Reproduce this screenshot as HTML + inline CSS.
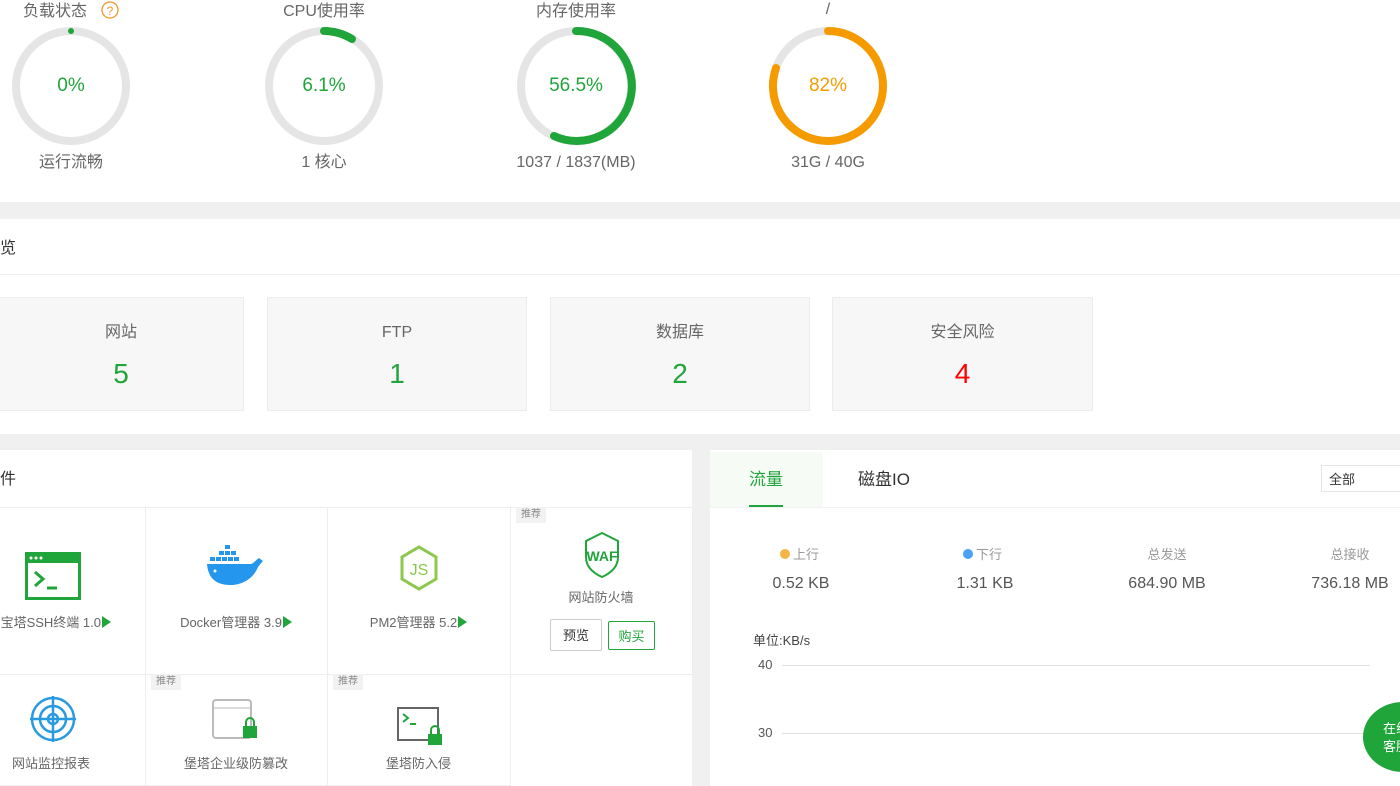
<!DOCTYPE html>
<html><head><meta charset="utf-8"><style>
*{box-sizing:border-box;margin:0;padding:0}
body{width:1400px;height:786px;overflow:hidden;background:#f0f0f0;font-family:"Liberation Sans","Noto Sans CJK SC",sans-serif;position:relative;color:#666}
.a{position:absolute}
.t{position:absolute;white-space:nowrap;line-height:24px}
.c{text-align:center;transform:translateX(-50%)}
.card{position:absolute;top:297px;height:114px;background:#f7f7f7;border:1px solid #ececec;text-align:center}
.card .l{position:absolute;left:0;right:0;top:25px;line-height:20px;font-size:16px;color:#666}
.card .n{position:absolute;left:0;right:0;top:59px;line-height:34px;font-size:28px;color:#20a53a}
.cell{position:absolute;border-right:1px solid #eee;border-bottom:1px solid #eee}
.tag{position:absolute;font-size:10px;color:#888;background:#f2f2f2;padding:1px 5px;top:0;left:6px;line-height:14px}
.lbl{position:absolute;width:100%;text-align:center;font-size:13px;color:#666;line-height:22px}
.tri{display:inline-block;width:0;height:0;border-left:9px solid #20a53a;border-top:6px solid transparent;border-bottom:6px solid transparent;vertical-align:-1px;margin-left:1px}
</style></head><body>
<div class="a" style="left:0;top:0;width:1400px;height:202px;background:#fff"></div>
<svg class="a" style="left:0;top:0" width="1000" height="202">
<g fill="none" stroke-width="8">
<circle cx="71" cy="86" r="55" stroke="#e5e5e5"/>
<circle cx="324" cy="86" r="55" stroke="#e5e5e5"/>
<circle cx="576" cy="86" r="55" stroke="#e5e5e5"/>
<circle cx="828" cy="86" r="55" stroke="#e5e5e5"/>
<circle cx="71" cy="31" r="3" fill="#20a53a" stroke="none"/>
<path d="M324 31 A55 55 0 0 1 352 39" stroke="#20a53a" stroke-linecap="round"/>
<path d="M576 31 A55 55 0 1 1 554 136" stroke="#20a53a" stroke-linecap="round"/>
<path d="M828 31 A55 55 0 1 1 776 68" stroke="#f59b00" stroke-linecap="round"/>
</g>
<circle cx="110" cy="10" r="8" fill="none" stroke="#f0962c" stroke-width="1.3"/>
<text x="110" y="15" font-size="12" fill="#f0962c" text-anchor="middle" font-family="Liberation Sans">?</text>
</svg>
<div class="t" style="left:23px;top:0;font-size:16px">负载状态</div>
<div class="t c" style="left:324px;top:0;font-size:16px">CPU使用率</div>
<div class="t c" style="left:576px;top:0;font-size:16px">内存使用率</div>
<div class="t c" style="left:828px;top:-2px;font-size:16px">/</div>
<div class="t c" style="left:71px;top:74px;font-size:19px;color:#20a53a">0%</div>
<div class="t c" style="left:324px;top:74px;font-size:19px;color:#20a53a">6.1%</div>
<div class="t c" style="left:576px;top:74px;font-size:19px;color:#20a53a">56.5%</div>
<div class="t c" style="left:828px;top:74px;font-size:19px;color:#f59b00">82%</div>
<div class="t c" style="left:71px;top:151px;font-size:16px">运行流畅</div>
<div class="t c" style="left:324px;top:151px;font-size:16px">1 核心</div>
<div class="t c" style="left:576px;top:151px;font-size:16px">1037 / 1837(MB)</div>
<div class="t c" style="left:828px;top:151px;font-size:16px">31G / 40G</div>

<div class="a" style="left:0;top:219px;width:1400px;height:215px;background:#fff"></div>
<div class="t" style="left:0;top:237px;font-size:16px;color:#333">览</div>
<div class="a" style="left:0;top:274px;width:1400px;height:1px;background:#eee"></div>
<div class="card" style="left:-2px;width:246px"><div class="l">网站</div><div class="n">5</div></div>
<div class="card" style="left:267px;width:260px"><div class="l">FTP</div><div class="n">1</div></div>
<div class="card" style="left:550px;width:260px"><div class="l">数据库</div><div class="n">2</div></div>
<div class="card" style="left:832px;width:261px"><div class="l">安全风险</div><div class="n" style="color:#f00">4</div></div>

<div class="a" style="left:0;top:450px;width:692px;height:336px;background:#fff"></div>
<div class="t" style="left:0;top:468px;font-size:16px;color:#333">件</div>
<div class="a" style="left:0;top:507px;width:692px;height:1px;background:#eee"></div>
<div class="cell" style="left:0;top:507px;width:146px;height:168px">
<svg class="a" style="left:25px;top:45px" width="56" height="48"><rect x="1.5" y="1.5" width="53" height="45" fill="none" stroke="#20a53a" stroke-width="3"/><rect x="1" y="1" width="54" height="10" fill="#20a53a"/><circle cx="6" cy="6" r="1.5" fill="#fff"/><circle cx="11" cy="6" r="1.5" fill="#fff"/><circle cx="16" cy="6" r="1.5" fill="#fff"/><path d="M10 20l8 7-8 7M22 36h10" stroke="#20a53a" stroke-width="3" fill="none"/></svg>
<div class="lbl" style="top:105px;text-align:right;padding-right:34px">宝塔SSH终端 1.0<span class="tri"></span></div></div>
<div class="cell" style="left:145px;top:507px;width:183px;height:168px">
<svg class="a" style="left:62px;top:38px" width="58" height="42"><g fill="#2496ed"><rect x="18" y="0" width="5" height="4"/><rect x="12" y="6" width="5" height="4"/><rect x="18" y="6" width="5" height="4"/><rect x="24" y="6" width="5" height="4"/><rect x="3" y="12" width="5" height="4"/><rect x="9" y="12" width="5" height="4"/><rect x="15" y="12" width="5" height="4"/><rect x="21" y="12" width="5" height="4"/><rect x="27" y="12" width="5" height="4"/><path d="M0 19h44c3-1 6-5 8-6l4 3c-2 2-4 5-5 6-4 10-14 18-28 18C8 40 1 32 0 19z"/></g><circle cx="8" cy="26" r="1.5" fill="#fff"/></svg>
<div class="lbl" style="top:105px">Docker管理器 3.9<span class="tri"></span></div></div>
<div class="cell" style="left:327px;top:507px;width:184px;height:168px">
<svg class="a" style="left:72px;top:38px" width="40" height="46"><path d="M20 2l17 10v22L20 44 3 34V12z" fill="none" stroke="#8cc84b" stroke-width="3"/><text x="20" y="30" font-size="16" fill="#8cc84b" text-anchor="middle" font-family="Liberation Sans">JS</text></svg>
<div class="lbl" style="top:105px">PM2管理器 5.2<span class="tri"></span></div></div>
<div class="cell" style="left:510px;top:507px;width:183px;height:168px"><span class="tag">推荐</span>
<svg class="a" style="left:72px;top:24px" width="40" height="48"><path d="M20 2l16 8v16c0 10-7 16-16 20C11 42 4 36 4 26V10z" fill="none" stroke="#20a53a" stroke-width="2"/><text x="20" y="30" font-size="14" fill="#20a53a" text-anchor="middle" font-weight="bold" font-family="Liberation Sans">WAF</text></svg>
<div class="lbl" style="top:80px">网站防火墙</div>
<div class="a" style="left:40px;top:112px;width:52px;height:32px;border:1px solid #ccc;border-radius:2px;font-size:13px;color:#333;text-align:center;line-height:32px">预览</div>
<div class="a" style="left:98px;top:114px;width:47px;height:29px;border:1px solid #20a53a;border-radius:2px;font-size:13px;color:#20a53a;text-align:center;line-height:29px">购买</div></div>
<div class="cell" style="left:0;top:674px;width:146px;height:112px">
<svg class="a" style="left:30px;top:22px" width="46" height="46"><g fill="none" stroke="#2a9ae0" stroke-width="2.5"><circle cx="23" cy="23" r="21"/><circle cx="23" cy="23" r="13"/><circle cx="23" cy="23" r="5"/><path d="M23 0v46M0 23h46"/></g></svg>
<div class="lbl" style="top:79px;text-align:left;padding-left:12px">网站监控报表</div></div>
<div class="cell" style="left:145px;top:674px;width:183px;height:112px"><span class="tag">推荐</span>
<svg class="a" style="left:66px;top:24px" width="50" height="44"><rect x="2" y="2" width="38" height="38" rx="3" fill="none" stroke="#bbb" stroke-width="2"/><path d="M2 10h38" stroke="#bbb"/><rect x="32" y="28" width="14" height="12" fill="#20a53a"/><path d="M35 28v-4a4 4 0 0 1 8 0v4" fill="none" stroke="#20a53a" stroke-width="2"/></svg>
<div class="lbl" style="top:79px">堡塔企业级防篡改</div></div>
<div class="cell" style="left:327px;top:674px;width:184px;height:112px"><span class="tag">推荐</span>
<svg class="a" style="left:69px;top:32px" width="48" height="40"><rect x="2" y="2" width="40" height="32" fill="none" stroke="#666" stroke-width="2"/><path d="M7 8l5 4-5 4M14 18h6" stroke="#20a53a" stroke-width="2" fill="none"/><rect x="32" y="28" width="14" height="11" fill="#20a53a"/><path d="M35 28v-4a4 4 0 0 1 8 0v4" fill="none" stroke="#20a53a" stroke-width="2"/></svg>
<div class="lbl" style="top:79px">堡塔防入侵</div></div>

<div class="a" style="left:710px;top:450px;width:690px;height:336px;background:#fff"></div>
<div class="a" style="left:710px;top:452px;width:113px;height:55px;background:#f6fbf6"></div>
<div class="t" style="left:749px;top:468px;font-size:17px;color:#20a53a">流量</div>
<div class="a" style="left:749px;top:505px;width:34px;height:3px;background:#20a53a"></div>
<div class="t" style="left:858px;top:468px;font-size:17px;color:#333">磁盘IO</div>
<div class="a" style="left:1321px;top:465px;width:90px;height:27px;border:1px solid #e5e5e5;font-size:13px;color:#333;padding:2px 7px;line-height:24px">全部</div>
<div class="a" style="left:710px;top:507px;width:690px;height:1px;background:#f2f2f2"></div>
<div class="t" style="left:780px;top:543px;font-size:13px;color:#999"><span style="display:inline-block;width:10px;height:10px;border-radius:50%;background:#f5b445;margin-right:3px"></span>上行</div>
<div class="t" style="left:963px;top:543px;font-size:13px;color:#999"><span style="display:inline-block;width:10px;height:10px;border-radius:50%;background:#4aa1f5;margin-right:3px"></span>下行</div>
<div class="t c" style="left:1167px;top:543px;font-size:13px;color:#999">总发送</div>
<div class="t c" style="left:1350px;top:543px;font-size:13px;color:#999">总接收</div>
<div class="t c" style="left:801px;top:572px;font-size:16px;color:#555">0.52 KB</div>
<div class="t c" style="left:985px;top:572px;font-size:16px;color:#555">1.31 KB</div>
<div class="t c" style="left:1167px;top:572px;font-size:16px;color:#555">684.90 MB</div>
<div class="t c" style="left:1350px;top:572px;font-size:16px;color:#555">736.18 MB</div>
<div class="t" style="left:753px;top:629px;font-size:13px;color:#444">单位:KB/s</div>
<div class="t" style="left:758px;top:653px;font-size:13px;color:#555">40</div>
<div class="t" style="left:758px;top:721px;font-size:13px;color:#555">30</div>
<div class="a" style="left:782px;top:665px;width:588px;height:1px;background:#e0e0e0"></div>
<div class="a" style="left:782px;top:733px;width:620px;height:1px;background:#e0e0e0"></div>
<div class="a" style="left:1363px;top:702px;width:80px;height:70px;border-radius:50%;background:#20a53a"></div>
<div class="t" style="left:1383px;top:720px;font-size:13px;color:#fff;line-height:18px">在线<br>客服</div>
</body></html>
